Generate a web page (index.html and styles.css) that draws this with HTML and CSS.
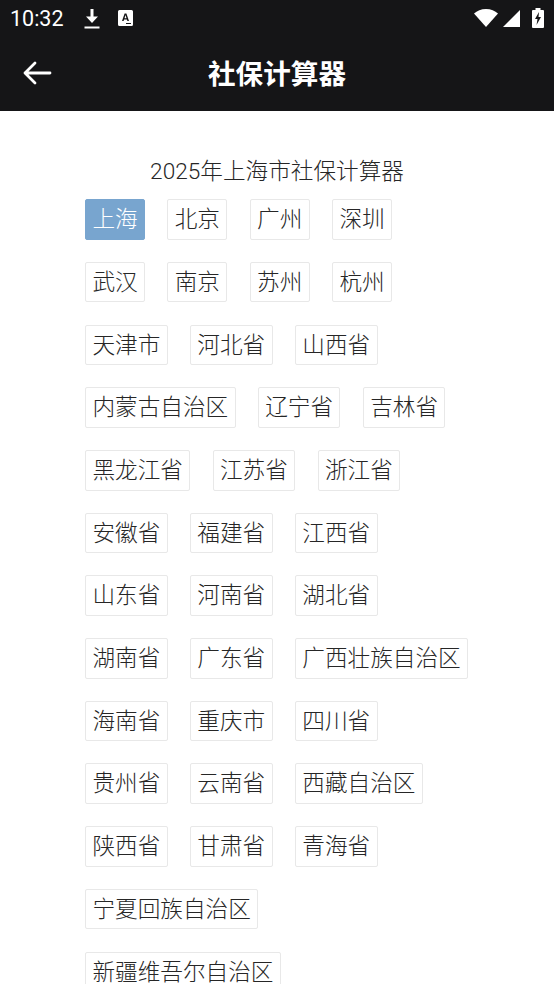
FILE: index.html
```html
<!DOCTYPE html>
<html lang="zh-CN">
<head>
<meta charset="utf-8">
<title>社保计算器</title>
<link rel="stylesheet" href="styles.css">
</head>
<body>
<header class="top">
  <div class="status">
    <span class="time">10:32</span>
    <svg class="ic-dl" viewBox="0 0 16 20"><path d="M6.500 0h3v7.500H14L8 14 2 7.500h4.500zM.5 17.500h15v2H.5z" fill="#fff"/></svg>
    <svg class="ic-a" viewBox="0 0 15 16"><path d="M1.500 0h12A1.500 1.500 0 0 1 15 1.500v13a1.500 1.500 0 0 1-1.500 1.500h-12A1.500 1.500 0 0 1 0 14.500v-13A1.500 1.500 0 0 1 1.500 0z" fill="#fff"/><path d="M4 11 6.600 3.500h1.800L11 11H9.400l-.5-1.600H6.100L5.600 11zM6.500 8.200h2L7.500 5z" fill="#151517"/><path d="M8 13h5v1H8z" fill="#151517"/></svg>
    <span class="spacer"></span>
    <svg class="ic-wifi" viewBox="0 0 24 18"><path d="M0 4.500C3 1.800 7.200 0 12 0s9 1.800 12 4.500L12 18z" fill="#fff"/></svg>
    <svg class="ic-sig" viewBox="0 0 17 17"><path d="M17 0v17H0z" fill="#fff"/></svg>
    <svg class="ic-bat" viewBox="0 0 12 20"><path d="M3.500 0h5v2H11a1 1 0 0 1 1 1v16a1 1 0 0 1-1 1H1a1 1 0 0 1-1-1V3a1 1 0 0 1 1-1h2.500z" fill="#fff"/><path d="M7 4 3 11h2.500L4.500 17 9 9H6.500z" fill="#151517"/></svg>
  </div>
  <div class="bar">
    <svg class="back" viewBox="0 0 30 26"><path d="M28 13H3M13 3 3 13l10 10" fill="none" stroke="#fff" stroke-width="2.800" stroke-linecap="round" stroke-linejoin="round"/></svg>
    <h1 class="title">社保计算器</h1>
  </div>
</header>
<main class="content">
  <h2 class="heading">2025年上海市社保计算器</h2>
  <div class="tags">
    <span class="tag active">上海</span><span class="tag">北京</span><span class="tag">广州</span><span class="tag">深圳</span>
    <span class="tag">武汉</span><span class="tag">南京</span><span class="tag">苏州</span><span class="tag">杭州</span>
    <span class="tag">天津市</span><span class="tag">河北省</span><span class="tag">山西省</span>
    <span class="tag">内蒙古自治区</span><span class="tag">辽宁省</span><span class="tag">吉林省</span>
    <span class="tag">黑龙江省</span><span class="tag">江苏省</span><span class="tag">浙江省</span>
    <span class="tag">安徽省</span><span class="tag">福建省</span><span class="tag">江西省</span>
    <span class="tag">山东省</span><span class="tag">河南省</span><span class="tag">湖北省</span>
    <span class="tag">湖南省</span><span class="tag">广东省</span><span class="tag">广西壮族自治区</span>
    <span class="tag">海南省</span><span class="tag">重庆市</span><span class="tag">四川省</span>
    <span class="tag">贵州省</span><span class="tag">云南省</span><span class="tag">西藏自治区</span>
    <span class="tag">陕西省</span><span class="tag">甘肃省</span><span class="tag">青海省</span>
    <span class="tag">宁夏回族自治区</span>
    <span class="tag">新疆维吾尔自治区</span>
  </div>
</main>
</body>
</html>
```

FILE: styles.css
```css
* { box-sizing: border-box; }
html, body { margin: 0; padding: 0; height: 100%; overflow: hidden; background: #fff; }
body { font-family: Roboto, "Noto Sans CJK SC", sans-serif; color: #262626; }
.top { background: #151517; height: 111px; display: flex; flex-direction: column; }
.status { height: 37px; display: flex; align-items: center; padding: 0 10px 0 10px; color: #fff; }
.time { font: 400 21.500px/1 Roboto, sans-serif; width: 53px; }
.ic-dl { width: 16px; height: 20px; margin-left: 21px; }
.ic-a { width: 15px; height: 16px; margin-left: 18px; margin-top: -2px; }
.spacer { flex: 1; }
.ic-wifi { width: 24px; height: 18px; margin-top: -1px; }
.ic-sig { width: 17px; height: 17px; margin-left: 5px; margin-top: -1px; }
.ic-bat { width: 12px; height: 20px; margin-left: 12px; margin-top: -1px; }
.bar { flex: 1; display: flex; align-items: center; justify-content: center; position: relative; padding-top: 1px; }
.back { position: absolute; left: 22px; top: 23px; width: 30px; height: 26px; }
.title { margin: 0; font-size: 27.600px; font-weight: 700; color: #fff; line-height: 1; }
.content { padding: 46px 85px 0; }
.heading { margin: 0 -20px; text-align: center; font-size: 22.640px; font-weight: 300; color: #262626; line-height: 30px; }
.tags { display: flex; flex-wrap: wrap; gap: 22.200px 22.300px; margin-top: 12.300px; }
.tag { display: block; height: 40.500px; line-height: 40px; padding: 0 6.400px; border: 1px solid #e8e8e8; border-radius: 2px; font-size: 22.640px; font-weight: 300; color: #262626; white-space: nowrap; background: #fff; }
.tag.active { background: #78a5cf; border-color: #78a5cf; color: #fff; }
```
